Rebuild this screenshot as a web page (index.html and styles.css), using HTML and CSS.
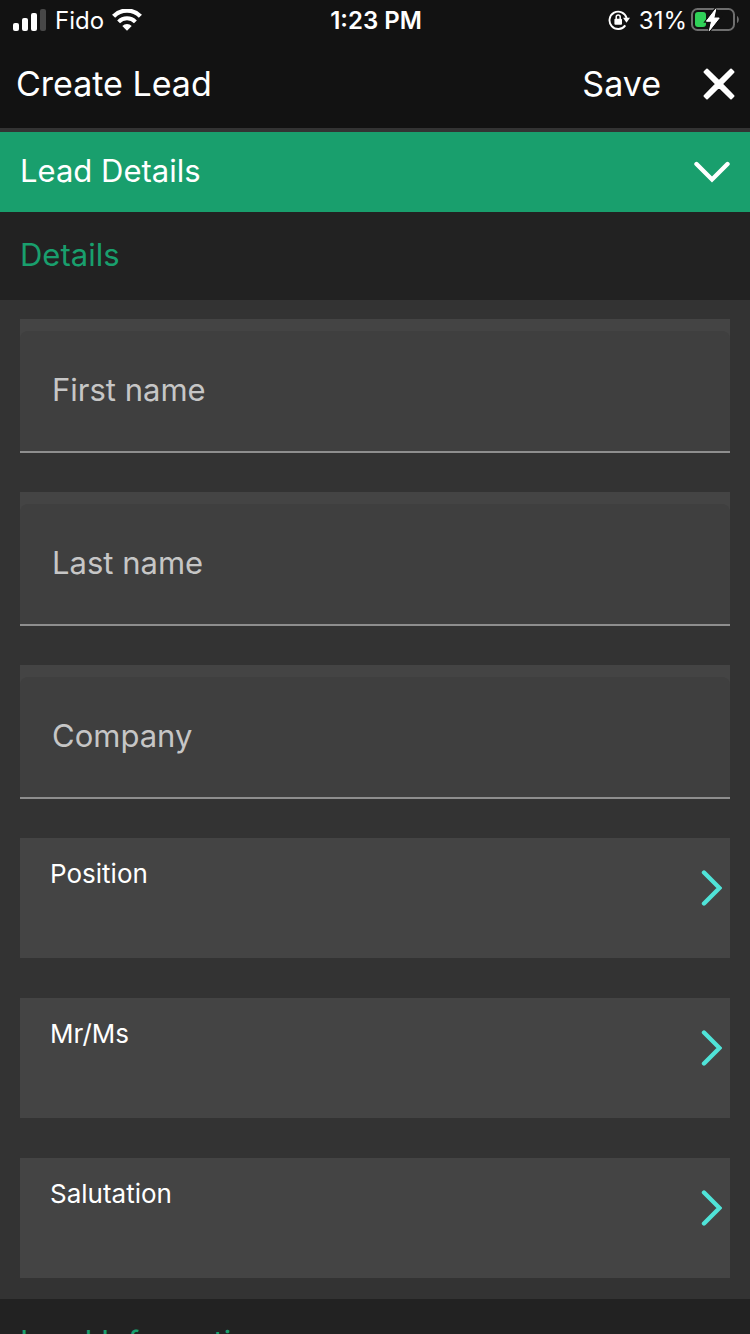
FILE: index.html
```
<!DOCTYPE html>
<html lang="en">
<head>
	<meta charset="UTF-8">
	<meta name="viewport" content="width=device-width, initial-scale=1">
	<title>Create Lead</title>
	<link rel="stylesheet" href="styles.css">
</head>
<body>
	<div class="status">
		<div class="carrier">
			<svg class="signal" width="34" height="22" viewBox="0 0 34 22">
				<rect x="0" y="14" width="6" height="8" rx="2" fill="#fff"/>
				<rect x="9" y="9" width="6" height="13" rx="2" fill="#fff"/>
				<rect x="18" y="4" width="6" height="18" rx="2" fill="#fff"/>
				<rect x="27" y="0" width="6" height="22" rx="2" fill="#474747"/>
			</svg>
			<span>Fido</span>
			<svg class="wifi" width="30" height="22" viewBox="0 0 30 22">
				<path d="M1.600 7.200a19 19 0 0 1 26.800 0" fill="none" stroke="#fff" stroke-width="4.400"/>
				<path d="M6.600 12.800a11.800 11.800 0 0 1 16.800 0" fill="none" stroke="#fff" stroke-width="4"/>
				<path d="M10.300 17a6.500 6.500 0 0 1 9.400 0L15 21.800z" fill="#fff"/>
			</svg>
		</div>
		<span class="clock">1:23 PM</span>
		<div class="power">
			<svg class="lock" width="22" height="22" viewBox="0 0 22 22">
				<path d="M17.300 16.400a8.700 8.700 0 1 1 1.300-7.400" fill="none" stroke="#fff" stroke-width="1.900"/>
				<path d="M15 8.800h7l-3.500 5z" fill="#fff"/>
				<rect x="6.400" y="9.800" width="7.600" height="6" rx="1" fill="#fff"/>
				<path d="M8.200 10.400V8a2 2 0 0 1 4 0v2.400" fill="none" stroke="#fff" stroke-width="1.500"/>
			</svg>
			<span>31%</span>
			<svg class="battery" width="48" height="26" viewBox="0 0 48 26">
				<rect x="1" y="2" width="42" height="21" rx="5.500" fill="none" stroke="#6e6e6e" stroke-width="2"/>
				<path d="M46 9c2.400 1 2.400 6 0 7z" fill="#6e6e6e"/>
				<rect x="4" y="5" width="11" height="15" rx="3" fill="#30d158"/>
				<path d="M24.800 2L15.400 14.200h5.200L18.400 23.600l9.800-12.600h-5.400z" fill="#fff" stroke="#121212" stroke-width="3" paint-order="stroke"/>
				<path d="M24.800 2L15.400 14.200h5.200L18.400 23.600l9.800-12.600h-5.400z" fill="#fff" stroke="#fff" stroke-width="1" stroke-linejoin="round"/>
			</svg>
		</div>
	</div>
	<header class="topbar">
		<h1>Create Lead</h1>
		<button type="button" class="save">Save</button>
		<button type="button" class="close" aria-label="Close">
			<svg width="32" height="32" viewBox="0 0 32 32">
				<path d="M4 1.500L16 13.200 28 1.500 30.500 4 18.800 16 30.500 28 28 30.500 16 18.800 4 30.500 1.500 28 13.200 16 1.500 4z" fill="#fff" stroke="#fff" stroke-width="2" stroke-linejoin="round"/>
			</svg>
		</button>
	</header>
	<main class="content">
		<button type="button" class="accordion" aria-expanded="true">
			<span>Lead Details</span>
			<svg width="36" height="22" viewBox="0 0 36 22">
				<path d="M2.500 3L18 18.500 33.500 3" fill="none" stroke="#fff" stroke-width="4.400" stroke-linecap="round"/>
			</svg>
		</button>
		<h2 class="section">Details</h2>
		<form class="fields">
			<div class="field">
				<input type="text" id="firstname" placeholder="First name" aria-label="First name">
			</div>
			<div class="field">
				<input type="text" id="lastname" placeholder="Last name" aria-label="Last name">
			</div>
			<div class="field">
				<input type="text" id="company" placeholder="Company" aria-label="Company">
			</div>
			<button type="button" class="picker">
				<span>Position</span>
				<svg width="22" height="36" viewBox="0 0 22 36">
					<path d="M4 2.500L19.500 18 4 33.500" fill="none" stroke="#50e3d8" stroke-width="4.400" stroke-linecap="round"/>
				</svg>
			</button>
			<button type="button" class="picker">
				<span>Mr/Ms</span>
				<svg width="22" height="36" viewBox="0 0 22 36">
					<path d="M4 2.500L19.500 18 4 33.500" fill="none" stroke="#50e3d8" stroke-width="4.400" stroke-linecap="round"/>
				</svg>
			</button>
			<button type="button" class="picker">
				<span>Salutation</span>
				<svg width="22" height="36" viewBox="0 0 22 36">
					<path d="M4 2.500L19.500 18 4 33.500" fill="none" stroke="#50e3d8" stroke-width="4.400" stroke-linecap="round"/>
				</svg>
			</button>
		</form>
		<h2 class="section">Lead Information</h2>
	</main>
</body>
</html>
```

FILE: styles.css
```
* {
	box-sizing: border-box;
}
body {
	background-color: #333;
	color: #fff;
	display: flex;
	flex-direction: column;
	font-family: Inter, "Liberation Sans", sans-serif;
	height: 100vh;
	margin: 0;
	overflow: hidden;
}
button {
	background: none;
	border: none;
	color: inherit;
	cursor: pointer;
	font-family: inherit;
	padding: 0;
}
svg {
	display: block;
	flex: none;
}

/* status bar */
.status {
	align-items: center;
	background-color: #121212;
	display: grid;
	flex: none;
	font-size: 24px;
	grid-template-columns: 1fr auto 1fr;
	height: 40px;
	padding: 0 11px 0 13px;
}
.carrier,
.power {
	align-items: center;
	display: flex;
}
.carrier {
	gap: 8px;
}
.power {
	gap: 4px;
	justify-content: flex-end;
}
.lock {
	margin-right: 5px;
}
.clock {
	font-weight: 600;
}

/* top bar */
.topbar {
	align-items: center;
	background-color: #121212;
	border-bottom: 4px solid #333;
	display: flex;
	flex: none;
	height: 92px;
	padding: 0 15px 0 16px;
}
.topbar h1 {
	flex: 1;
	font-size: 34px;
	font-weight: 400;
	line-height: 40px;
	margin: 0;
}
.topbar .save {
	font-size: 34px;
	line-height: 40px;
	margin-right: 42px;
}

/* content */
.content {
	flex: 1;
	min-height: 0;
	overflow-y: auto;
	scrollbar-width: none;
}
.accordion {
	align-items: center;
	background-color: #199f6d;
	display: flex;
	font-size: 31px;
	height: 80px;
	justify-content: space-between;
	padding: 0 20px;
	width: 100%;
}
.accordion span {
	line-height: 40px;
	padding-bottom: 2px;
}
.section {
	background-color: #222;
	color: #199f6d;
	font-size: 31px;
	font-weight: 400;
	line-height: 40px;
	margin: 0;
	padding: 23px 20px 25px;
}

/* form */
.fields {
	padding: 19px 20px 21px;
}
.field {
	background-color: #444;
	border-bottom: 2px solid #8e8e8e;
	margin-bottom: 39px;
	padding-top: 12px;
}
.field input {
	background-color: #3f3f3f;
	border: none;
	border-radius: 8px 8px 0 0;
	color: #fff;
	display: block;
	font-family: inherit;
	font-size: 31px;
	height: 120px;
	outline: none;
	padding: 0 32px 3px;
	width: 100%;
}
.field input::placeholder {
	color: #c6c6c6;
	opacity: 1;
}
.picker {
	align-items: flex-start;
	background-color: #444;
	display: flex;
	font-size: 26px;
	height: 120px;
	justify-content: space-between;
	line-height: 32px;
	padding: 20px 8px 20px 30px;
	width: 100%;
}
.picker + .picker {
	margin-top: 40px;
}
.picker svg {
	margin-top: 12px;
}
```
